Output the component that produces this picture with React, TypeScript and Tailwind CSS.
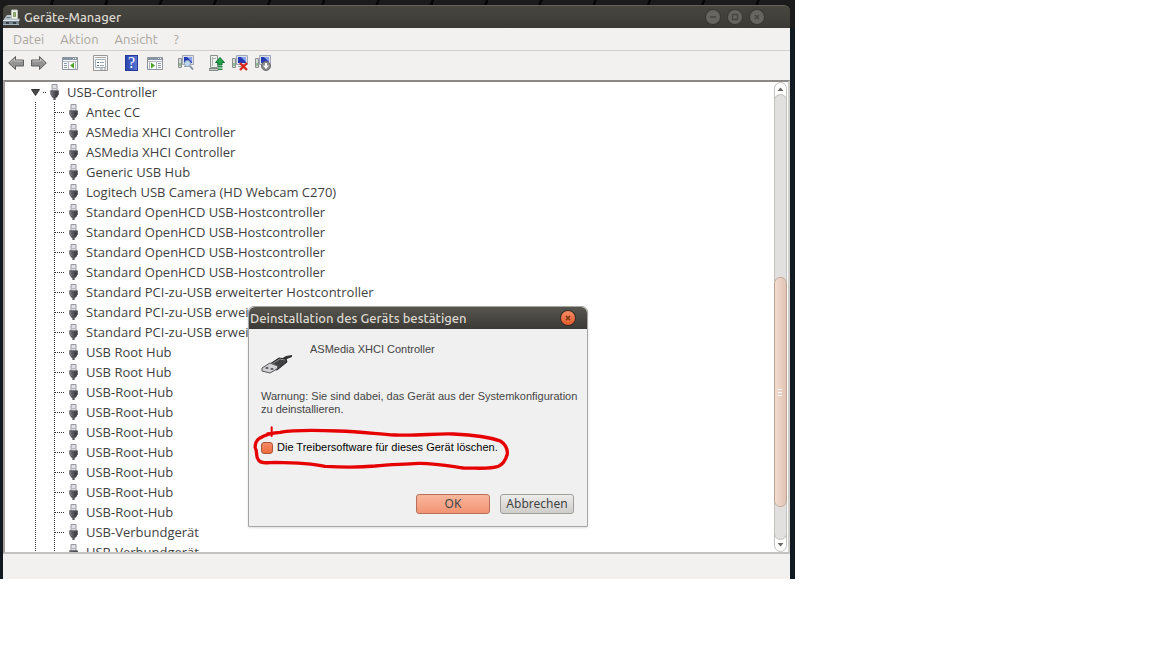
import type { ReactNode } from "react";
import { useState } from "react";

const devices = [
	"Antec CC",
	"ASMedia XHCI Controller",
	"ASMedia XHCI Controller",
	"Generic USB Hub",
	"Logitech USB Camera (HD Webcam C270)",
	"Standard OpenHCD USB-Hostcontroller",
	"Standard OpenHCD USB-Hostcontroller",
	"Standard OpenHCD USB-Hostcontroller",
	"Standard OpenHCD USB-Hostcontroller",
	"Standard PCI-zu-USB erweiterter Hostcontroller",
	"Standard PCI-zu-USB erweiterter Hostcontroller",
	"Standard PCI-zu-USB erweiterter Hostcontroller",
	"USB Root Hub",
	"USB Root Hub",
	"USB-Root-Hub",
	"USB-Root-Hub",
	"USB-Root-Hub",
	"USB-Root-Hub",
	"USB-Root-Hub",
	"USB-Root-Hub",
	"USB-Root-Hub",
	"USB-Verbundgerät",
	"USB-Verbundgerät",
];

const dotsV =
	"w-px bg-[repeating-linear-gradient(to_bottom,#333_0px,#333_1px,#fff_1px,#fff_2px)]";
const dotsH =
	"h-px bg-[repeating-linear-gradient(to_right,#333_0px,#333_1px,#fff_1px,#fff_2px)]";

function UsbPlug() {
	return (
		<svg aria-hidden="true" viewBox="0 0 9 16" className="h-4 w-[9px] shrink-0">
			<path d="M2 .5h5V7H2Z" fill="#dfdfe6" stroke="#96969e" />
			<path d="M3 4.5h3" stroke="#b4b4bf" />
			<path d="M.3 6.5h8.4v3.8L7 13.2 5.6 14.3V16H3.4v-1.7L2 13.2.3 10.3Z" fill="#55555a" />
			<path d="M1.8 7.5v3.3l1 1.4" fill="none" stroke="#85858c" />
			<path d="M5 7h3.5v3.2L7 13H5Z" fill="#434348" />
			<path d="M.5 6.8h8" stroke="#6c6c72" strokeWidth=".8" />
		</svg>
	);
}

function AppIcon() {
	return (
		<svg aria-hidden="true" viewBox="0 0 17 17" className="h-[17px] w-[17px]">
			<path d="M8.5 1h6v9h-6z" fill="#f1f3ea" stroke="#b9c2b9" />
			<path d="M10.5 3.5h2v4h-2z" fill="#a6bd7f" stroke="#7d9760" />
			<path d="m1 10 3-4h4v4h7l1.5-1v3H1Z" fill="#b6c0c8" />
			<path d="M3.5 8.5h4" stroke="#63717c" />
			<path d="M0 11h16v5H0z" fill="#76838e" />
			<path d="M0 11.5h16" stroke="#dde5ea" />
			<path d="M0 15.5h16" stroke="#a9b5bd" />
			<path d="M3 13h3v2H3zM10 13h3v2h-3z" fill="#36414a" />
		</svg>
	);
}

function Arrow({ back = false }: { back?: boolean }) {
	return (
		<svg aria-hidden="true" viewBox="0 0 16 16" className="h-4 w-4">
			<path
				d={
					back
						? "M.7 8 7.5 1.5V5h8v6h-8v3.5Z"
						: "M15.3 8 8.5 1.5V5h-8v6h8v3.5Z"
				}
				fill="#929292"
				stroke="#5e5e5e"
			/>
			<path
				d={back ? "M2.5 7.5 6.5 4v2h8" : "M1.5 6h8V4l4 3.5"}
				fill="none"
				stroke="#c4c4c4"
			/>
		</svg>
	);
}

function Pane({ side }: { side: "left" | "right" }) {
	return (
		<svg aria-hidden="true" viewBox="0 0 16 16" className="h-4 w-4">
			<path d="M.5 2.5h15v12H.5z" fill="#fdfdfd" stroke="#8b939c" />
			<path d="M1 4h14" stroke="#8696a8" strokeWidth="2" />
			<path d="M11 3.5h1M13 3.5h1" stroke="#fff" />
			<path d="M1 6.5h14" stroke="#b5bcc5" />
			{side === "left" ? (
				<>
					<path d="M2 8.5h3M2 10.5h3M2 12.5h3" stroke="#8c9aac" />
					<path d="M6.5 7v7M13.5 7v7" stroke="#aeb6bf" />
					<path d="M12 7.5v6L8 10.5Z" fill="#4aa428" />
				</>
			) : (
				<>
					<path d="M11 8.5h3M11 10.5h3M11 12.5h3" stroke="#8c9aac" />
					<path d="M9.5 7v7M2.5 7v7" stroke="#aeb6bf" />
					<path d="M4 7.5v6l4-3Z" fill="#4aa428" />
				</>
			)}
		</svg>
	);
}

function Properties() {
	return (
		<svg aria-hidden="true" viewBox="0 0 16 16" className="h-4 w-4">
			<path d="M.5.5h14v15H.5z" fill="#f7f7f7" stroke="#979797" />
			<path d="M2 2.5h11" stroke="#aaa" />
			<path d="M2.5 4.5h10v8h-10z" fill="#fff" stroke="#a6b0b8" />
			<path d="M4 7.5h2M4 10.5h2" stroke="#55677a" />
			<path d="M7 7.5h4M7 10.5h4" stroke="#97a4b2" />
			<path d="M7 14h3M11 14h2" stroke="#8b9097" />
		</svg>
	);
}

function Help() {
	return (
		<span className="ml-px flex h-4 w-[13px] items-center justify-center border border-[#25399a] bg-linear-to-r from-[#2c46ad] to-[#5876d5] font-['Liberation_Serif',serif] text-base leading-4 text-white">
			?
		</span>
	);
}

function Computer({ children }: { children: ReactNode }) {
	return (
		<svg aria-hidden="true" viewBox="0 0 16 16" className="h-4 w-4">
			<path d="M.5 3.5h3v9h-3z" fill="#d4dad8" stroke="#89908e" />
			<path d="M2 8v3" stroke="#4b9a4e" />
			<path d="M4.5.5h11v9h-11z" fill="#dce1e8" stroke="#a0a8b4" />
			<path d="M6 2h8v6H6z" fill="#2439b5" />
			<path d="M9 2h5v5Z" fill="#8ba4ed" />
			<path d="M6 11.5h7" stroke="#969da5" />
			{children}
		</svg>
	);
}

function ScanIcon() {
	return (
		<Computer>
			<circle cx="9.5" cy="8.5" r="3" fill="#bcd7ee" stroke="#8fa3b8" />
			<path d="m12 11 3 3.5" stroke="#7d8da0" strokeWidth="1.8" />
		</Computer>
	);
}

function UninstallIcon() {
	return (
		<Computer>
			<path d="m8 8 7 7M15 8l-7 7" stroke="#d9261c" strokeWidth="2.4" />
		</Computer>
	);
}

function DisableIcon() {
	return (
		<Computer>
			<circle cx="11" cy="11" r="4.5" fill="#8a8a8a" stroke="#6d6d6d" />
			<path d="M11 8v3" stroke="#fff" strokeWidth="2" />
			<path d="M8 10.5h6L11 14Z" fill="#fff" />
		</Computer>
	);
}

function UpdateIcon() {
	return (
		<svg aria-hidden="true" viewBox="0 0 16 16" className="h-4 w-4">
			<path d="M1.5.5h7v12h-7z" fill="#edf0ef" stroke="#88908e" />
			<path d="M3.5 2v9M3 3.5h4" stroke="#a9b3b0" />
			<path d="M0 13.5h9v2H0z" fill="#c4cac7" stroke="#818986" />
			<path d="m11 2.5 4.5 5H13V10H9V7.5H6.5Z" fill="#25a34b" stroke="#137334" />
			<path d="M9 11.8h4.5M9 14.2h4.5" stroke="#208c43" strokeWidth="1.5" />
		</svg>
	);
}

function ToolButton({ label, children }: { label: string; children: ReactNode }) {
	return (
		<button type="button" aria-label={label} className="block h-4 w-4">
			{children}
		</button>
	);
}

function WindowButton({ label, path }: { label: string; path: string }) {
	return (
		<button
			type="button"
			aria-label={label}
			className="flex h-[14px] w-[14px] items-center justify-center rounded-full bg-[#66655f] ring-1 ring-[#393833]"
		>
			<svg aria-hidden="true" viewBox="0 0 14 14" className="h-[14px] w-[14px]">
				<path d={path} fill="none" stroke="#45443f" strokeWidth="1.4" />
			</svg>
		</button>
	);
}

function ScrollBar() {
	return (
		<div className="mr-[1px] flex w-[13px] shrink-0 flex-col rounded-full border border-[#c3c1be] bg-white">
			<button
				type="button"
				aria-label="Nach oben"
				className="flex h-3 items-center justify-center"
			>
				<svg aria-hidden="true" viewBox="0 0 7 4" className="h-1 w-[7px]">
					<path d="M.5 4 3.5.5 6.5 4Z" fill="#6b6965" />
				</svg>
			</button>
			<div className="flex min-h-0 flex-1 flex-col rounded-full bg-[#e1e0de] ring-1 ring-[#c3c1be]">
				<div className="grow-[183] basis-0" />
				<div className="flex grow-[229] basis-0 flex-col items-center justify-center gap-[2px] rounded-full bg-linear-to-r from-[#f3dccf] to-[#e0c3b3] ring-1 ring-[#c0a292]">
					<span className="h-px w-1 bg-white" />
					<span className="h-px w-1 bg-white" />
					<span className="h-px w-1 bg-white" />
				</div>
				<div className="grow-[33] basis-0" />
			</div>
			<button
				type="button"
				aria-label="Nach unten"
				className="flex h-3 items-center justify-center"
			>
				<svg aria-hidden="true" viewBox="0 0 7 4" className="h-1 w-[7px]">
					<path d="M.5 0h6L3.5 3.5Z" fill="#6b6965" />
				</svg>
			</button>
		</div>
	);
}

function DeviceTree() {
	return (
		<ul className="min-w-0 flex-1 overflow-hidden pl-[26px] font-['Open_Sans','Noto_Sans',sans-serif]">
			<li>
				<div className="flex h-5 items-center">
					<svg aria-hidden="true" viewBox="0 0 9 7" className="h-[7px] w-[9px]">
						<path d="M.5.5h8L4.5 6.5Z" fill="#4a4a4a" stroke="#333" />
					</svg>
					<span className={`mr-1 ml-[3px] w-[3px] ${dotsH}`} />
					<UsbPlug />
					<span className="ml-2">USB-Controller</span>
				</div>
				<ul>
					{devices.map((name, i) => (
						<li key={i} className="flex h-5 items-center pl-1">
							<span className={`self-stretch ${dotsV}`} />
							<span className={`ml-[18px] self-stretch ${dotsV}`} />
							<span className={`mr-1 w-[10px] ${dotsH}`} />
							<UsbPlug />
							<span className="ml-2 whitespace-nowrap">{name}</span>
						</li>
					))}
				</ul>
			</li>
		</ul>
	);
}

function UninstallDialog() {
	const [removeDriver, setRemoveDriver] = useState(true);

	return (
		<section
			role="dialog"
			aria-label="Deinstallation des Geräts bestätigen"
			className="absolute top-[306px] left-[248px] w-[340px] rounded-t-md border border-[#a5a5a3] bg-[#f0f0f0] shadow-sm"
		>
			<header className="flex h-[22px] items-center justify-between rounded-t-md bg-linear-to-b from-[#56554e] to-[#3b3a36] pr-3 pl-px">
				<h2 className="text-[13px] font-medium text-[#dfdbd2]">
					Deinstallation des Geräts bestätigen
				</h2>
				<button
					type="button"
					aria-label="Schließen"
					className="flex h-[14px] w-[14px] items-center justify-center rounded-full bg-linear-to-b from-[#f58a62] to-[#e35a2a] ring-1 ring-[#3a2a22]"
				>
					<svg aria-hidden="true" viewBox="0 0 14 14" className="h-[14px] w-[14px]">
						<path d="m5 5 4 4M9 5 5 9" stroke="#7d3518" strokeWidth="1.6" />
					</svg>
				</button>
			</header>
			<div className="px-3 pt-[14px] pb-3 font-['Liberation_Sans',Arial,sans-serif] text-[11px] leading-[13px] text-[#444]">
				<div className="flex">
					<svg aria-hidden="true" viewBox="0 0 32 20" className="mt-[11px] h-5 w-8">
						<path d="m20 5 5-3 6-1v2l-5 2-5 4Z" fill="#333" />
						<path d="m9 10 9-6 7 1 1 3-10 8-7-2Z" fill="#404043" stroke="#222" />
						<path d="m11 10 8-5 5 1" fill="none" stroke="#8b8b8f" />
						<path d="m1 14 8-5 8 3-1 3-7 4-8-2Z" fill="#d1d1d3" stroke="#55555a" />
						<path d="m4 14 2-1 2 1-2 1ZM9 15l2-1 2 1-2 1Z" fill="#3d3d40" />
					</svg>
					<p className="ml-[17px]">ASMedia XHCI Controller</p>
				</div>
				<p className="-mr-2 mt-4">
					Warnung: Sie sind dabei, das Gerät aus der Systemkonfiguration
					<br />
					zu deinstallieren.
				</p>
				<label className="mt-[25px] flex items-center gap-1 text-black">
					<input
						type="checkbox"
						checked={removeDriver}
						onChange={(e) => setRemoveDriver(e.target.checked)}
						className="h-3 w-3 appearance-none rounded-[3px] border border-[#a8553a] bg-white checked:bg-linear-to-b checked:from-[#f58b64] checked:to-[#ec6a3c]"
					/>
					Die Treibersoftware für dieses Gerät löschen.
				</label>
				<div className="mt-10 flex justify-end gap-[10px] pr-px font-['Noto_Sans',sans-serif] text-xs text-[#444]">
					<button
						type="button"
						className="h-5 w-[74px] rounded-[3px] border border-[#b8705a] bg-linear-to-b from-[#f9b79d] to-[#f29473]"
					>
						OK
					</button>
					<button
						type="button"
						className="h-5 w-[74px] rounded-[3px] border border-[#a09e9a] bg-linear-to-b from-[#ececeb] to-[#cfcdca]"
					>
						Abbrechen
					</button>
				</div>
			</div>
			{/* hand-drawn marker round the tick box */}
			<svg
				aria-hidden="true"
				viewBox="9 18 1020 666"
				className="pointer-events-none absolute -top-px -left-px h-[222px] w-[340px]"
				fill="none"
				stroke="#e60000"
				strokeLinecap="round"
				strokeLinejoin="round"
			>
				<path
					strokeWidth="10"
					d="M45 414C60 404 78 399 105 397C150 389 210 390 280 393C350 395 395 402 450 405C520 408 570 400 625 402C685 405 735 412 766 423C780 432 788 446 787 462C782 480 774 493 760 499C735 508 705 504 655 504C620 499 570 489 520 490C470 494 435 492 390 498C340 503 290 502 240 499C195 489 150 488 90 487C65 488 50 492 41 481C30 470 39 458 31 444C29 432 35 419 45 414Z"
				/>
				<path strokeWidth="6" d="M80 382v26M67 400l28-2" />
			</svg>
		</section>
	);
}

export default function App() {
	return (
		<div className="relative min-h-screen bg-white font-['Ubuntu','Noto_Sans',sans-serif] text-[13px] leading-5 text-[#3f3f3f]">
			<main className="flex h-[89.4vh] w-[69%] flex-col bg-[#121a21] bg-[repeating-linear-gradient(110deg,#1b1b1b_0px,#1b1b1b_48px,#060606_49px,#060606_51px)] bg-[length:100%_28px] bg-no-repeat pt-[5px] pr-[5px] pl-[3px]">
				<header className="flex h-[23px] shrink-0 items-center rounded-t-md border-t border-[#62615a] bg-linear-to-b from-[#47463f] to-[#3b3a36] pr-[26px]">
					<AppIcon />
					<h1 className="ml-1 flex-1 text-[13px] font-medium text-[#dfdbd2]">
						Geräte-Manager
					</h1>
					<div className="flex gap-2">
						<WindowButton label="Minimieren" path="M4 7h6" />
						<WindowButton label="Maximieren" path="M4.5 4.5h5v5h-5z" />
						<WindowButton label="Schließen" path="m5 5 4 4M9 5 5 9" />
					</div>
				</header>
				<nav className="flex h-[23px] shrink-0 items-center gap-4 border-b border-[#d0cfcd] bg-[#f2f1f0] pl-[10px] text-[#aaa59d]">
					<button type="button">Datei</button>
					<button type="button">Aktion</button>
					<button type="button">Ansicht</button>
					<button type="button">?</button>
				</nav>
				<div className="flex h-[29px] shrink-0 items-center gap-[15px] bg-[#f2f1f0] pb-1.5 pl-[5px]">
					<div className="flex gap-[7px]">
						<ToolButton label="Zurück">
							<Arrow back />
						</ToolButton>
						<ToolButton label="Vorwärts">
							<Arrow />
						</ToolButton>
					</div>
					<ToolButton label="Konsolenstruktur">
						<Pane side="left" />
					</ToolButton>
					<ToolButton label="Eigenschaften">
						<Properties />
					</ToolButton>
					<div className="flex gap-[7px]">
						<ToolButton label="Hilfe">
							<Help />
						</ToolButton>
						<ToolButton label="Aktionsbereich">
							<Pane side="right" />
						</ToolButton>
					</div>
					<ToolButton label="Nach geänderter Hardware suchen">
						<ScanIcon />
					</ToolButton>
					<div className="flex gap-[7px]">
						<ToolButton label="Treibersoftware aktualisieren">
							<UpdateIcon />
						</ToolButton>
						<ToolButton label="Deinstallieren">
							<UninstallIcon />
						</ToolButton>
						<ToolButton label="Deaktivieren">
							<DisableIcon />
						</ToolButton>
					</div>
				</div>
				<div className="flex min-h-0 flex-1 overflow-hidden border-x-2 border-t-2 border-b-2 border-t-[#8b8885] border-r-[#cfcdca] border-b-[#c4c2bf] border-l-[#a5a09c] bg-white">
					<DeviceTree />
					<ScrollBar />
				</div>
				<footer className="h-[25px] shrink-0 bg-[#f2f1f0]" />
			</main>
			<UninstallDialog />
		</div>
	);
}
